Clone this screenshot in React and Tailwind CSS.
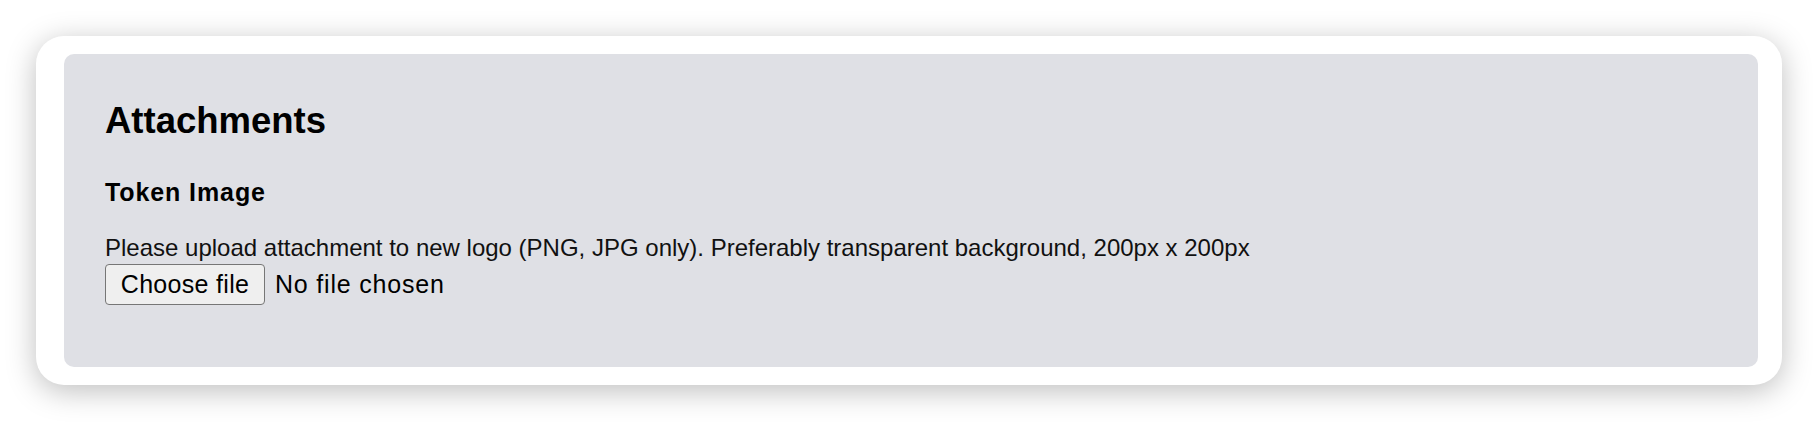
import React from "react";

export default function App() {
  return (
    <div
      className="w-full h-[422px] bg-white pt-[36px] pl-[36px] pr-[36px]"
      style={{ fontFamily: '"Liberation Sans", Arial, sans-serif' }}
    >
      {/* Card */}
      <div className="rounded-[28px] bg-white pt-[18px] pb-[18px] pl-[28px] pr-[24px] shadow-[0_6px_30px_rgba(0,0,0,0.26)]">
        <div className="h-[313px] rounded-[10px] bg-[#dfe0e5] pl-[41px] pt-[45px]">
          <h3 className="text-[36.5px] leading-[43px] font-bold text-black">
            Attachments
          </h3>

          <p className="mt-[35px] text-[25px] leading-[30px] font-bold tracking-[0.9px] text-black">
            Token Image
          </p>

          <p className="mt-[27px] text-[24px] leading-[28px] text-[#111]">
            Please upload attachment to new logo (PNG, JPG only). Preferably
            transparent background, 200px x 200px
          </p>

          <div className="mt-[2px] flex items-center gap-[10px]">
            <button className="h-[41px] w-[160px] rounded-[4px] border border-[#767676] bg-[#efefef] text-[25px] leading-none tracking-[0.3px] text-black">
              Choose file
            </button>
            <span className="text-[25px] leading-none tracking-[0.8px] text-black">
              No file chosen
            </span>
          </div>
        </div>
      </div>
    </div>
  );
}
